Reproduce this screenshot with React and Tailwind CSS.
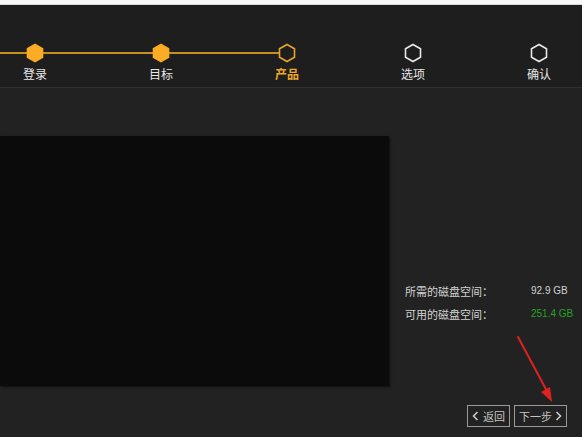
import React from 'react';

const steps = [
  { label: '登录', state: 'done' },
  { label: '目标', state: 'done' },
  { label: '产品', state: 'current' },
  { label: '选项', state: 'todo' },
  { label: '确认', state: 'todo' },
];

const Hex = ({ state }) => {
  const done = state === 'done';
  const current = state === 'current';
  return (
    <svg width="18" height="20" viewBox="0 0 18 20" className="relative z-10">
      <polygon
        points="9,1.5 16.5,5.75 16.5,14.25 9,18.5 1.5,14.25 1.5,5.75"
        fill={done ? '#fbac25' : '#1e1e1e'}
        stroke={done ? '#fbac25' : current ? '#e9a52a' : '#e8e8e8'}
        strokeWidth="1.6"
      />
    </svg>
  );
};

const Step = ({ label, state, index, last }) => {
  const leftOn = index <= 2;
  const rightOn = index < 2;
  return (
    <div className="relative w-[126px] flex flex-col items-center shrink-0">
      {leftOn && (
        <div className="absolute left-0 right-1/2 top-[9px] h-[2px] bg-[#c8901f]" />
      )}
      {rightOn && !last && (
        <div className="absolute left-1/2 right-0 top-[9px] h-[2px] bg-[#c8901f]" />
      )}
      <Hex state={state} />
      <span
        className={
          'mt-[3px] text-[12px] leading-[16px] ' +
          (state === 'current' ? 'text-[#eea726] font-bold' : 'text-[#e6e6e6]')
        }
      >
        {label}
      </span>
    </div>
  );
};

export default function App() {
  return (
    <div
      className="w-[582px] h-[437px] overflow-hidden bg-[#222222] flex flex-col"
      style={{ fontFamily: '"Noto Sans CJK SC", "Liberation Sans", sans-serif' }}
    >
      <div className="h-[5px] bg-[#f7f7f7] border-b border-[#d8d8d8]" />

      {/* step header */}
      <div className="h-[83px] bg-[#1e1e1e] border-b border-[#2f2f2f] flex items-start pt-[38px]">
        <div className="flex ml-[-28px]">
          {steps.map((s, i) => (
            <Step key={s.label} {...s} index={i} last={i === steps.length - 1} />
          ))}
        </div>
      </div>

      {/* body */}
      <div className="flex-1 flex relative">
        <div className="w-[389px] shrink-0 pt-[48px] pb-[50px]">
          <div className="w-[389px] h-[250px] bg-[#0b0b0b] shadow-[1px_1px_2px_rgba(0,0,0,0.6)]" />
        </div>

        <div className="w-[193px] min-w-0 flex flex-col pl-[16px] pt-[195px]">
          <div className="flex whitespace-nowrap text-[11px] leading-[16px] text-[#d2d2d2]">
            <span className="w-[126px] shrink-0">所需的磁盘空间：</span>
            <span className="text-[10px]" style={{ fontFamily: '"Liberation Sans", sans-serif' }}>92.9 GB</span>
          </div>
          <div className="flex whitespace-nowrap text-[11px] leading-[16px] mt-[7px] text-[#d2d2d2]">
            <span className="w-[126px] shrink-0">可用的磁盘空间：</span>
            <span className="text-[10px] text-[#24a324]" style={{ fontFamily: '"Liberation Sans", sans-serif' }}>251.4 GB</span>
          </div>

          <div className="mt-auto mb-[10px] flex justify-end gap-[4px] pr-[15px]">
            <button className="h-[22px] w-[43px] shrink-0 border border-[#9a9a9a] text-[#c4c4c4] text-[11px] flex items-center justify-center gap-[4px]">
              <svg width="7" height="10" viewBox="0 0 7 10">
                <polyline points="5.5,1 1.5,5 5.5,9" fill="none" stroke="#d0d0d0" strokeWidth="1.5" />
              </svg>
              <span>返回</span>
            </button>
            <button className="h-[22px] w-[53px] shrink-0 border border-[#9a9a9a] text-[#c4c4c4] text-[11px] flex items-center justify-center gap-[3px]">
              <span>下一步</span>
              <svg width="7" height="10" viewBox="0 0 7 10">
                <polyline points="1.5,1 5.5,5 1.5,9" fill="none" stroke="#d0d0d0" strokeWidth="1.5" />
              </svg>
            </button>
          </div>
        </div>

        {/* red annotation arrow */}
        <svg className="absolute left-[510px] top-[245px] pointer-events-none" width="50" height="75" viewBox="0 0 50 75">
          <line x1="8" y1="4" x2="38" y2="60" stroke="#e02020" strokeWidth="2" strokeLinecap="round" />
          <polygon points="42,69 31,59 40,54" fill="#e02020" />
        </svg>
      </div>
    </div>
  );
}
